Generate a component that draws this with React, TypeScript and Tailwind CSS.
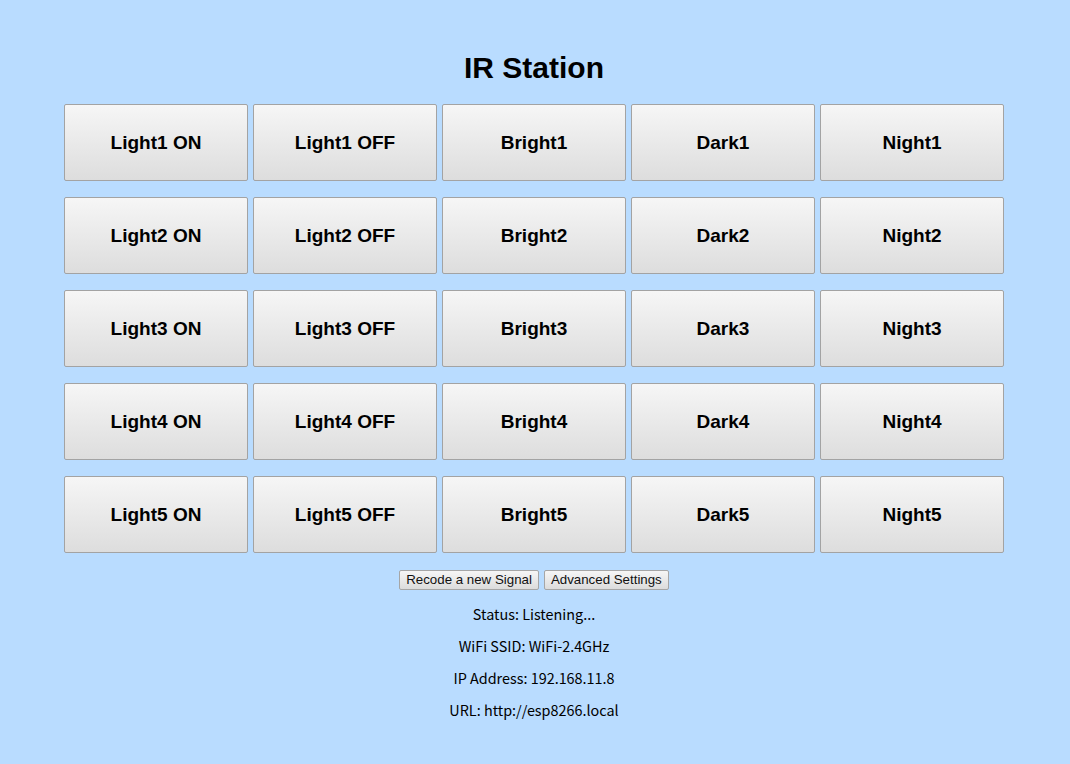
const labels = [
  ["Light1 ON", "Light1 OFF", "Bright1", "Dark1", "Night1"],
  ["Light2 ON", "Light2 OFF", "Bright2", "Dark2", "Night2"],
  ["Light3 ON", "Light3 OFF", "Bright3", "Dark3", "Night3"],
  ["Light4 ON", "Light4 OFF", "Bright4", "Dark4", "Night4"],
  ["Light5 ON", "Light5 OFF", "Bright5", "Dark5", "Night5"],
];

const info = [
  "Status: Listening...",
  "WiFi SSID: WiFi-2.4GHz",
  "IP Address: 192.168.11.8",
  "URL: http://esp8266.local",
];

function SmallButton({ children }: { children: string }) {
  return (
    <button className="h-[20px] px-[6px] text-[13.3px] leading-none text-[#111] border border-[#a6a6a6] rounded-[2px] bg-gradient-to-b from-[#f6f6f6] to-[#dcdcdc] font-['Liberation_Sans',Arial,sans-serif]">
      {children}
    </button>
  );
}

export default function App() {
  return (
    <div className="min-h-[764px] w-full bg-[#b9dcff] font-['Liberation_Sans',Arial,sans-serif]">
      <div className="ml-[64px] w-[940px] flex flex-col items-center">
        <h1 className="mt-[50px] mb-[18px] text-[30px] leading-[36px] font-bold text-black">
          IR Station
        </h1>
        <div className="grid grid-cols-5 w-full gap-x-[5px] gap-y-[16px]">
          {labels.flat().map((l) => (
            <button
              key={l}
              className="h-[77px] pt-[2px] border border-[#a3a3a3] rounded-[2px] bg-gradient-to-b from-[#f6f6f6] to-[#dddddd] text-[19px] font-bold text-black"
            >
              {l}
            </button>
          ))}
        </div>
        <div className="mt-[17px] flex gap-[5px]">
          <SmallButton>Recode a new Signal</SmallButton>
          <SmallButton>Advanced Settings</SmallButton>
        </div>
        <div className="mt-[14px] flex flex-col items-center gap-[12px] text-[14.4px] leading-[20px] text-black font-['Noto_Sans_CJK_JP',sans-serif]">
          {info.map((t) => (
            <p key={t}>{t}</p>
          ))}
        </div>
      </div>
    </div>
  );
}
